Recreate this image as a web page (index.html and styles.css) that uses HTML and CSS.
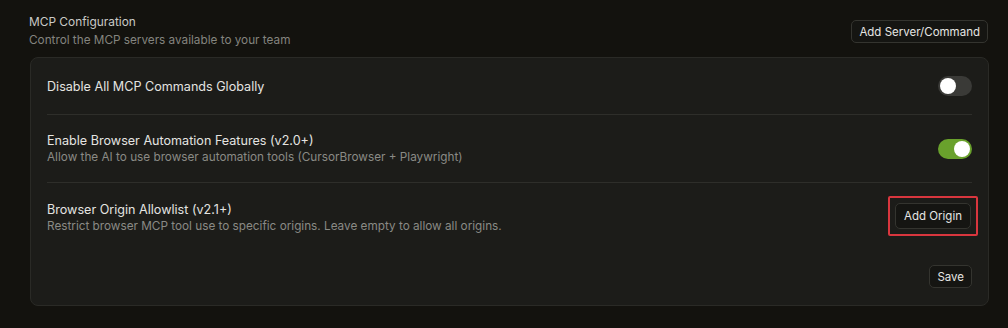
FILE: index.html
```html
<!DOCTYPE html>
<html>
<head>
<meta charset="utf-8">
<link rel="stylesheet" href="styles.css">
</head>
<body>
<div class="page">
  <div class="header">
    <div class="header-text">
      <div class="title">MCP Configuration</div>
      <div class="subtitle">Control the MCP servers available to your team</div>
    </div>
    <button class="btn btn-header">Add Server/Command</button>
  </div>
  <div class="card">
    <div class="row row-single">
      <div class="row-text">
        <div class="row-title">Disable All MCP Commands Globally</div>
      </div>
      <div class="toggle"><span class="knob"></span></div>
    </div>
    <div class="row">
      <div class="row-text">
        <div class="row-title">Enable Browser Automation Features (v2.0+)</div>
        <div class="row-desc">Allow the AI to use browser automation tools (CursorBrowser + Playwright)</div>
      </div>
      <div class="toggle on"><span class="knob"></span></div>
    </div>
    <div class="row row-last">
      <div class="row-text">
        <div class="row-title">Browser Origin Allowlist (v2.1+)</div>
        <div class="row-desc">Restrict browser MCP tool use to specific origins. Leave empty to allow all origins.</div>
      </div>
      <div class="highlight"><button class="btn">Add Origin</button></div>
    </div>
    <div class="footer">
      <button class="btn btn-save">Save</button>
    </div>
  </div>
</div>
</body>
</html>
```

FILE: styles.css
```css
html, body {
  margin: 0;
  padding: 0;
  background: #13120e;
}
body {
  font-family: Inter, "Noto Sans", sans-serif;
  color: #e2e2df;
  width: 1008px;
  height: 328px;
  overflow: hidden;
}
.page {
  padding: 13px 20px 0 29px;
}
.header {
  display: flex;
  justify-content: space-between;
  align-items: flex-start;
}
.title {
  font-size: 11.9px;
  line-height: 17px;
  color: #c9c9c6;
}
.subtitle {
  font-size: 11.75px;
  line-height: 17px;
  margin-top: 2px;
  color: #84847f;
}
.btn {
  font-family: Inter, "Noto Sans", sans-serif;
  font-size: 11.5px;
  color: #e6e6e3;
  background: #151512;
  border: 1px solid #34342f;
  border-radius: 5px;
  padding: 0 7px;
  height: 24px;
  line-height: 22px;
  cursor: pointer;
}
.btn-header {
  margin-top: 7px;
  height: 23px;
  padding: 0 7px;
}
.card {
  margin-top: 8px;
  margin-left: 1px;
  width: 959px;
  box-sizing: border-box;
  background: #1c1c19;
  border: 1px solid #2a2a26;
  border-radius: 8px;
  padding: 0 16px 16px 16px;
  height: 249px;
}
.row {
  display: flex;
  align-items: center;
  justify-content: space-between;
  border-bottom: 1px solid #2e2e2a;
  height: 67px;
}
.row-single {
  height: 56px;
}
.row-last {
  border-bottom: none;
  height: 68px;
}
.row-title {
  font-size: 12.6px;
  line-height: 17px;
  color: #e4e4e1;
}
.row-desc {
  font-size: 11.75px;
  line-height: 16px;
  color: #8a8a85;
}
.toggle {
  width: 34px;
  height: 20px;
  border-radius: 10px;
  background: #3a3a37;
  position: relative;
}
.toggle .knob {
  position: absolute;
  top: 2px;
  left: 2px;
  width: 16px;
  height: 16px;
  border-radius: 50%;
  background: #ffffff;
}
.toggle.on {
  background: #69a12c;
}
.toggle.on .knob {
  left: 16px;
}
.highlight {
  border: 2px solid #d9363e;
  border-radius: 2px;
  padding: 5px 5px;
  margin-right: -6px;
  margin-bottom: 2px;
}
.highlight .btn {
  display: block;
  height: 26px;
  padding: 0 8px;
}
.footer {
  display: flex;
  justify-content: flex-end;
  margin-top: 14px;
}
.btn-save {
  height: 23px;
  padding: 0 7px;
}
```
